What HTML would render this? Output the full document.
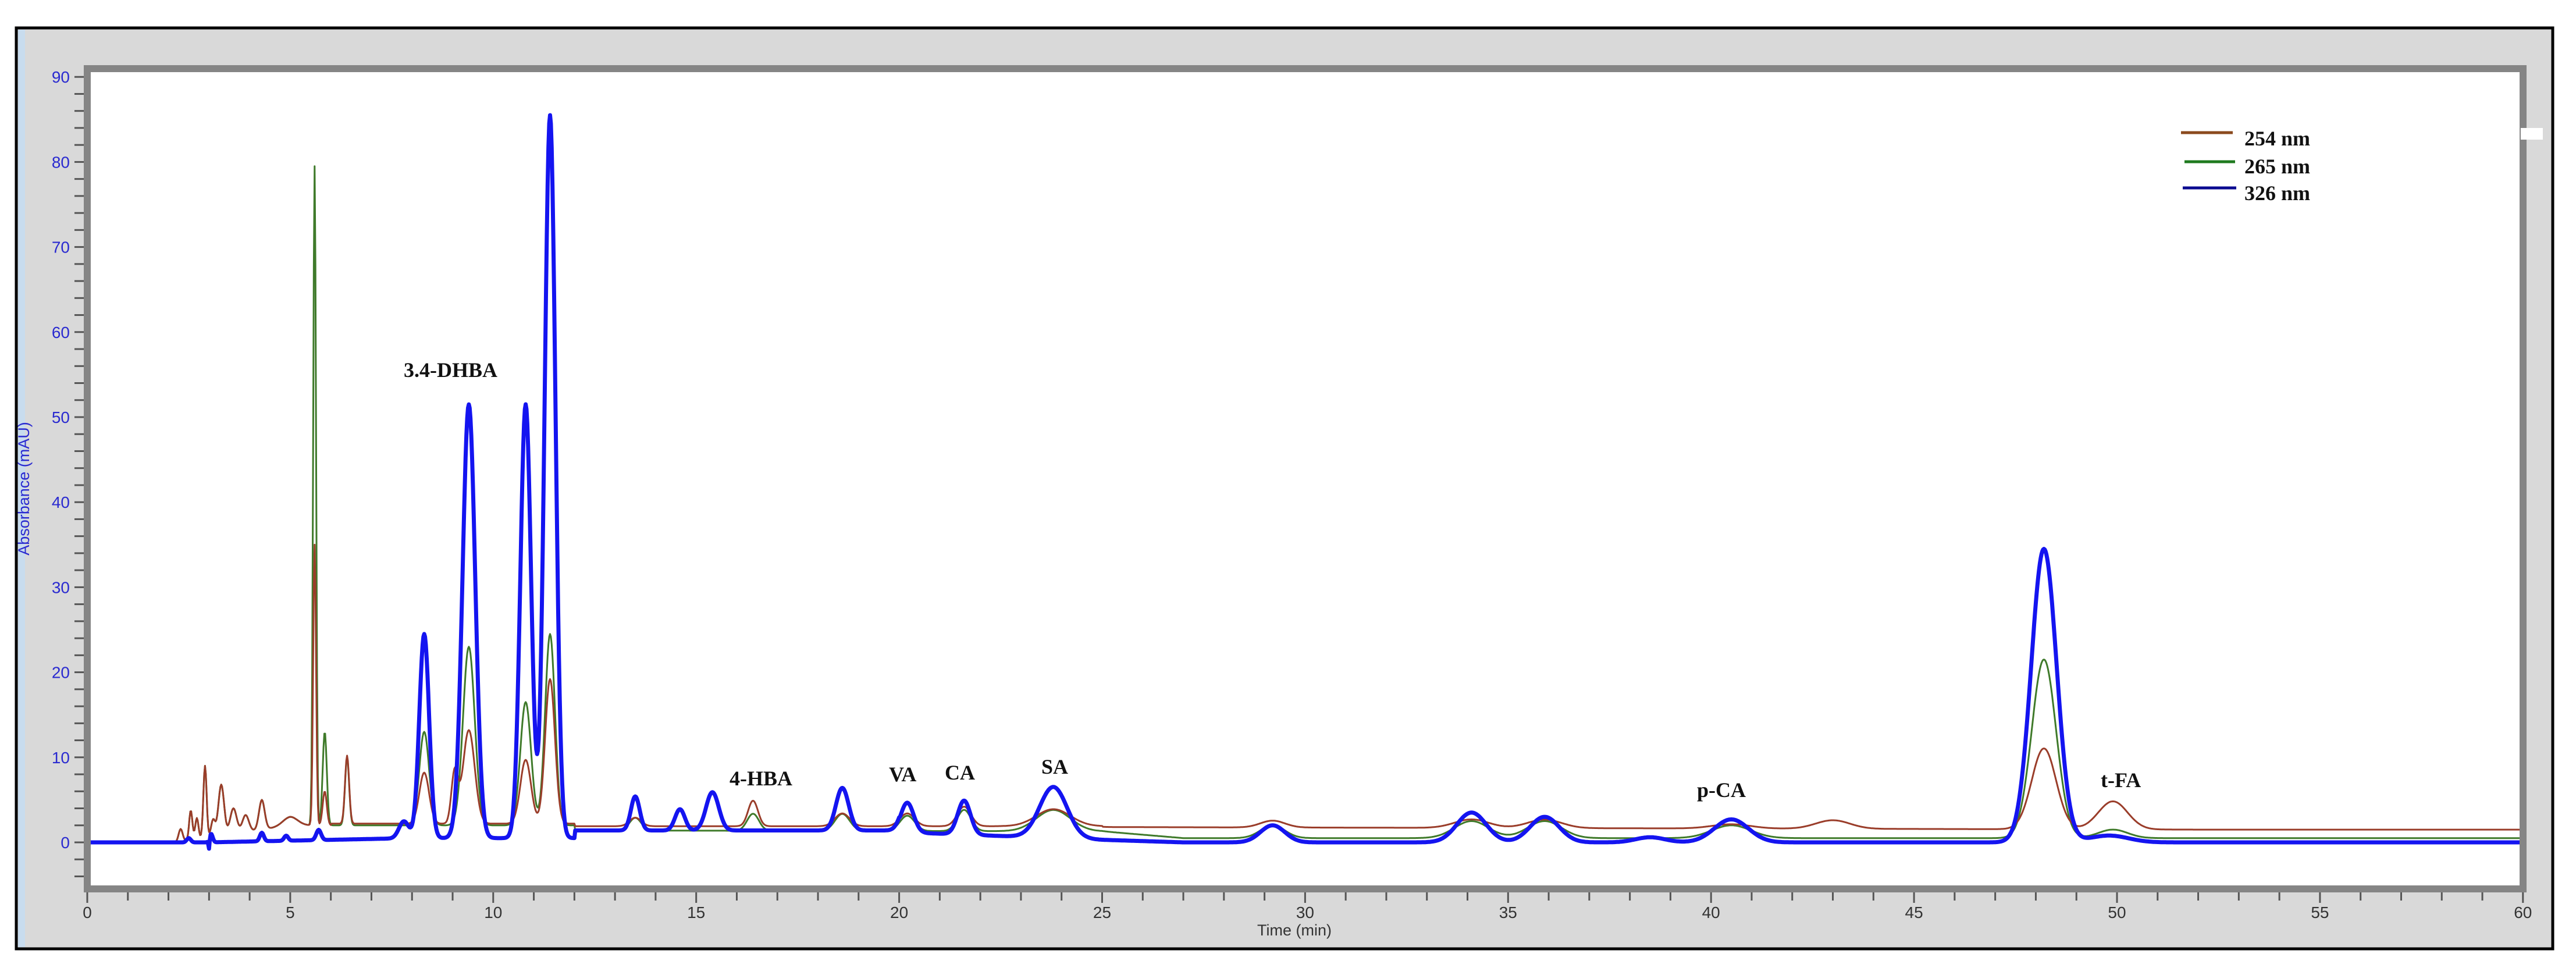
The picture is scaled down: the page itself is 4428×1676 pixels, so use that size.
<!DOCTYPE html>
<html><head><meta charset="utf-8">
<style>
html,body{margin:0;padding:0;background:#fff;}
body{width:4428px;height:1676px;overflow:hidden;position:relative;}
svg{position:absolute;left:0;top:0;}
</style></head>
<body>
<svg id="s" width="4428" height="1676" viewBox="0 0 4428 1676" xmlns="http://www.w3.org/2000/svg">
<rect x="0" y="0" width="4428" height="1676" fill="#fff"/>
<rect x="28" y="48" width="4360" height="1583" fill="#d9d9d9" stroke="#000" stroke-width="5"/>
<rect x="31" y="51" width="12" height="1577" fill="#c8dcee"/>
<rect x="150" y="118" width="4187" height="1410" fill="#fff" stroke="#858585" stroke-width="12"/>
<rect x="4333" y="220" width="38" height="20" fill="#fff"/>
<g id="ticks" stroke="#555" stroke-width="3"></g>
<g id="labels"></g>
<text x="50" y="840" transform="rotate(-90 50 840)" text-anchor="middle" font-family="Liberation Sans, sans-serif" font-size="27" fill="#2a2ad0">Absorbance (mAU)</text>
<text x="2225" y="1608" text-anchor="middle" font-family="Liberation Sans, sans-serif" font-size="27" fill="#333">Time (min)</text>
<defs><clipPath id="c"><rect x="156" y="124" width="4175" height="1398"/></clipPath></defs>
<g clip-path="url(#c)" fill="none" stroke-linejoin="round">
<path id="pg" stroke="#3f7a2a" stroke-width="3"/>
<path id="pb" stroke="#9a3d2a" stroke-width="3"/>
<path id="pc" stroke="#1414f0" stroke-width="7"/>
</g>
<g font-family="Liberation Serif, serif" font-size="36" font-weight="bold" fill="#111">
<text x="694" y="648">3.4-DHBA</text>
<text x="1254" y="1350">4-HBA</text>
<text x="1528" y="1343">VA</text>
<text x="1624" y="1340">CA</text>
<text x="1790" y="1330">SA</text>
<text x="2917" y="1370">p-CA</text>
<text x="3611" y="1353">t-FA</text>
</g>
<g font-family="Liberation Serif, serif" font-size="36" font-weight="bold" fill="#111">
<line x1="3749" y1="228" x2="3838" y2="228" stroke="#8b4a1e" stroke-width="5"/>
<line x1="3755" y1="278" x2="3842" y2="278" stroke="#1f7a1f" stroke-width="5"/>
<line x1="3752" y1="323" x2="3844" y2="323" stroke="#0a0a90" stroke-width="5"/>
<text x="3858" y="250">254 nm</text>
<text x="3858" y="298">265 nm</text>
<text x="3858" y="344">326 nm</text>
</g>
</svg>
<script>
(function(){
var NS="http://www.w3.org/2000/svg";
function X(t){return 150+t*69.78;}
function Y(v){return 1448-v*14.62;}
var tk=document.getElementById('ticks'),lb=document.getElementById('labels');
function ln(x1,y1,x2,y2){var l=document.createElementNS(NS,'line');l.setAttribute('x1',x1);l.setAttribute('y1',y1);l.setAttribute('x2',x2);l.setAttribute('y2',y2);tk.appendChild(l);}
function tx(x,y,s,c,a){var t=document.createElementNS(NS,'text');t.setAttribute('x',x);t.setAttribute('y',y);t.setAttribute('font-family','Liberation Sans, sans-serif');t.setAttribute('font-size','28');t.setAttribute('fill',c);t.setAttribute('text-anchor',a);t.textContent=s;lb.appendChild(t);}
for(var v=-4;v<=90;v+=2){var y=Y(v);ln(128,y,144,y);if(v%10==0)tx(120,y+10,String(v),'#2a2ad0','end');}
for(var t=0;t<=60;t++){var x=X(t);ln(x,1534,x,(t%5==0)?1552:1548);if(t%5==0)tx(x,1578,String(t),'#333','middle');}
function G(t,p){var s=0;for(var i=0;i<p.length;i++){var w=p[i][2];if(w>=0.09)w*=1.2;var d=(t-p[i][0])/w;s+=p[i][1]*Math.exp(-0.5*d*d);}return s;}
function sm(t,a,b,v0,v1){if(t<=a)return v0;if(t>=b)return v1;var f=(t-a)/(b-a);return v0+(v1-v0)*f;}
var early=[[2.3,1.5,0.05],[2.55,3.5,0.04],[2.7,2.5,0.04],[2.9,8.5,0.04],[3.1,2,0.05],[3.3,6,0.07],[3.6,3,0.08],[3.9,2,0.08],[4.3,3.5,0.07],[5.0,1,0.15]];
var green=early.concat([[5.6,77.5,0.035],[5.85,11,0.05],[6.4,8,0.05],[8.3,11,0.1],[9.4,21,0.12],[10.8,14.5,0.11],[11.4,22.5,0.1],[13.5,1.5,0.12],[16.4,2,0.12],[18.6,2,0.15],[20.2,1.8,0.15],[21.6,2.5,0.14],[23.8,2.5,0.35],[29.2,1.5,0.25],[34.1,2,0.35],[35.9,2,0.35],[40.5,1.5,0.4],[48.2,21,0.25],[49.9,1,0.3]]);
var brown=early.concat([[5.6,33,0.035],[5.85,4,0.05],[6.4,8,0.05],[8.3,6,0.1],[9.05,6,0.08],[9.4,11,0.12],[10.8,7.5,0.11],[11.4,17,0.1],[13.5,1,0.12],[16.4,3,0.1],[18.6,1.5,0.15],[20.2,1.5,0.15],[21.6,2.3,0.14],[23.8,2,0.35],[29.2,0.8,0.25],[34.1,1,0.35],[35.9,1,0.35],[40.5,0.5,0.4],[43,1,0.35],[48.2,9.5,0.25],[49.9,3.3,0.3]]);
var blue=[[2.5,0.5,0.05],[3.05,1,0.04],[4.3,1,0.05],[4.9,0.6,0.05],[5.7,1.2,0.06],[7.8,2,0.1],[8.3,24,0.1],[9.4,51,0.13],[10.8,51,0.11],[11.4,85,0.11],[13.5,4,0.09],[14.6,2.5,0.1],[15.4,4.5,0.13],[18.6,5,0.13],[20.2,3.5,0.13],[21.6,4,0.13],[23.8,6,0.28],[29.2,2,0.25],[34.1,3.5,0.3],[35.9,3,0.3],[38.5,0.6,0.3],[40.5,2.7,0.35],[48.2,34.5,0.26],[49.8,0.8,0.4]];
function bg(t){if(t<2.2)return 0;if(t<6)return sm(t,2.2,5,0,2);if(t<12)return 2;if(t<25)return sm(t,12,25,1.4,1.3);return sm(t,25,27,1.3,0.5);}
function bbr(t){if(t<2.2)return 0;if(t<6)return sm(t,2.2,5,0,2);if(t<12)return 2.2;if(t<25)return 1.9;return sm(t,25,52,1.8,1.5);}
function bbl(t){if(t<3)return 0;if(t<12)return sm(t,3,8,0,0.5);if(t<20)return 1.4;if(t<25)return sm(t,20,25,1.2,0.3);return sm(t,25,27,0.3,0);}
function mk(p,b,id,neg){var d='';for(var t=0;t<=60.5;t+=0.02){var v=G(t,p)+b(t);if(neg&&t>2.9&&t<3.1)v-=1.2*Math.exp(-Math.pow((t-3.0)/0.02,2));d+=(d?'L':'M')+X(t).toFixed(1)+' '+Y(v).toFixed(1);}document.getElementById(id).setAttribute('d',d);}
mk(green,bg,'pg');mk(brown,bbr,'pb');mk(blue,bbl,'pc',true);
})();
</script>
</body></html>
